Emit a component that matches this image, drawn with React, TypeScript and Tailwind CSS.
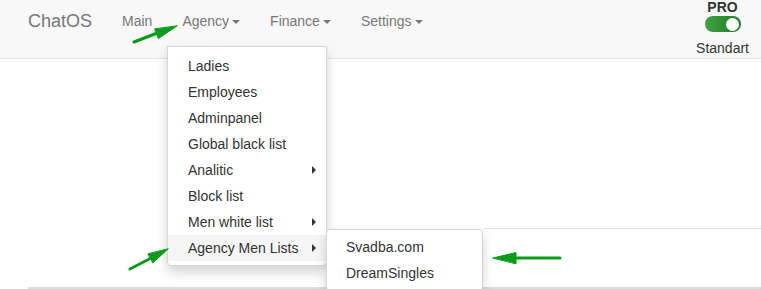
import React from 'react';

const agencyItems = [
  { label: 'Ladies' },
  { label: 'Employees' },
  { label: 'Adminpanel' },
  { label: 'Global black list' },
  { label: 'Analitic', sub: true },
  { label: 'Block list' },
  { label: 'Men white list', sub: true },
  { label: 'Agency Men Lists', sub: true, active: true },
];

const Caret = () => (
  <span className="ml-[3px] inline-block h-0 w-0 border-x-[4px] border-t-[4px] border-x-transparent border-t-[#777] align-middle" />
);

const SubArrow = () => (
  <span className="h-0 w-0 border-y-[4px] border-l-[4px] border-y-transparent border-l-[#333]" />
);

const Arrows = () => (
  <svg className="pointer-events-none absolute left-0 top-0" width="761" height="289" viewBox="0 0 761 289">
    <g fill="#0b9a1c" stroke="#0b9a1c" strokeWidth="3" strokeLinecap="round">
      <line x1="134" y1="42" x2="160" y2="32" />
      <polygon points="177,26 158.3,38.6 154.7,29.2" strokeWidth="1" />
      <line x1="130" y1="269" x2="153" y2="257" />
      <polygon points="168,249 152.8,262.9 148,254.1" strokeWidth="1" />
      <line x1="560" y1="258" x2="512" y2="258" />
      <polygon points="493,258 516,252.5 516,263.5" strokeWidth="1" />
    </g>
  </svg>
);

export default function App() {
  return (
    <div className="relative h-[289px] w-[761px] overflow-hidden bg-white font-['Liberation_Sans',Arial,sans-serif]">
      <nav className="flex h-[59px] border-b border-[#e7e7e7] bg-[#f8f8f8]">
        <div className="pl-[28px] pr-[15px] pt-[10px] text-[18px] leading-[22px] text-[#777]">ChatOS</div>
        <ul className="flex text-[14px] leading-[20px] text-[#777]">
          <li className="px-[15px] pt-[11px]">Main</li>
          <li className="px-[15px] pt-[11px]">Agency<Caret /></li>
          <li className="px-[15px] pt-[11px]">Finance<Caret /></li>
          <li className="px-[15px] pt-[11px]">Settings<Caret /></li>
        </ul>
        <div className="ml-auto mr-[12px] flex flex-col items-center">
          <div className="text-[14px] font-bold leading-[14px] text-[#333]">PRO</div>
          <div className="mt-[2px] flex h-[17px] w-[36px] items-center justify-end rounded-full bg-gradient-to-r from-[#3fa33f] to-[#1e7a2e] pr-[2px]">
            <span className="h-[13px] w-[13px] rounded-full bg-white" />
          </div>
          <div className="mt-[6px] text-[14px] leading-[20px] text-[#333]">Standart</div>
        </div>
      </nav>

      <div className="ml-[483px] mt-[169px] h-[59px] border-t border-[#e3e3e3]" />
      <div className="ml-[28px] h-[2px] bg-[#dcdcdc]" />

      <ul className="absolute left-[167px] top-[46px] w-[160px] rounded-b-[4px] border border-[#d5d5d5] bg-white pb-[4px] pt-[6px] text-[14px] leading-[26px] text-[#333] shadow-[0_6px_12px_rgba(0,0,0,0.175)]">
        {agencyItems.map((it) => (
          <li
            key={it.label}
            className={`flex items-center justify-between pl-[20px] pr-[10px] ${it.active ? 'bg-[#f5f5f5]' : ''}`}
          >
            <span>{it.label}</span>
            {it.sub && <SubArrow />}
          </li>
        ))}
      </ul>

      <ul className="absolute left-[326px] top-[229px] w-[157px] rounded-[4px] border border-[#d5d5d5] bg-white py-[4px] text-[14px] leading-[26px] text-[#333] shadow-[0_6px_12px_rgba(0,0,0,0.175)]">
        <li className="pl-[19px]">Svadba.com</li>
        <li className="pl-[19px]">DreamSingles</li>
      </ul>

      <Arrows />
    </div>
  );
}
